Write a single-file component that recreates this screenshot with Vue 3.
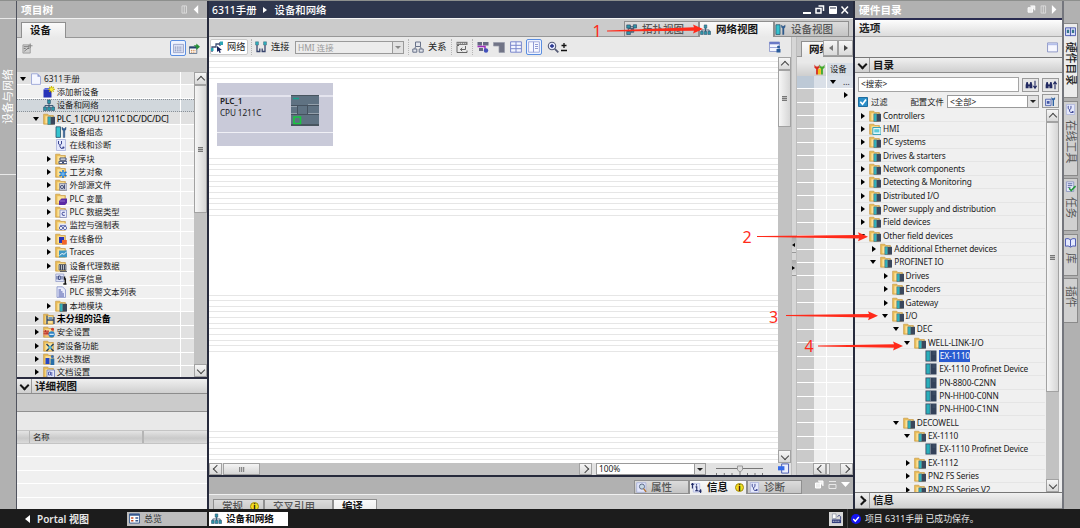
<script setup>
const folder = '<path d="M.6 1.200h4.200l1 1.300h4.600v8.700H.6z" fill="#e9bd58" stroke="#c2923a" stroke-width=".6"/><path d="M2.400 3.200h7v7.200h-7z" fill="#fbe29a"/>'
const module = '<path d="M4.800 3.800h3v7.800h-3z" fill="#2fb3bd" stroke="#4a5a6c" stroke-width=".5"/><path d="M7.800 3.800H12v7.800H7.800z" fill="#3b475c"/>'

const icons = {
  page: '<path d="M1.5.8h6l3 3v7.6h-9z" fill="#f4f6ff" stroke="#9aa5d6" stroke-width=".9"/><path d="M7.5.8v3h3z" fill="#8e9ad0"/>',
  add: '<path d="M.5 3.5h8v8h-8z" fill="#2733b8"/><path d="M.5 3.5l1.5-1.500h6v1.500z" fill="#5d6be0"/><path d="M8.500 0v6.500M5.300 3.300h6.500M6.200 1l4.600 4.600M10.800 1L6.200 5.600" stroke="#c9b90c" stroke-width="1.200"/><circle cx="8.500" cy="3.300" r="1.600" fill="#f6ec3c"/>',
  net: '<path d="M6 3.500v4M2 9V6.500h8V9M6 6.500V9" fill="none" stroke="#34506e" stroke-width=".9"/><path d="M4.600 1h2.800v3.500H4.600zM.6 8h2.900v3.500H.6zM4.600 8h2.900v3.500H4.600zM8.600 8h2.900v3.500H8.600z" fill="#2c98ab" stroke="#2c4a66" stroke-width=".6"/>',
  folder: folder + module,
  config: '<path d="M1 .8h4.500v10.600H1z" fill="#35c3cf" stroke="#24506b" stroke-width=".8"/><path d="M7 1v2.500l1.300 1.200V11.500h1.500V4.700L11 3.500V1L9.800 2.500H8.200z" fill="#2f5f96" stroke="#284a74" stroke-width=".4"/>',
  diag: '<path d="M1.500.5h9v11h-9z" fill="#e4e8fb" stroke="#a8b0dc" stroke-width=".8"/><path d="M3.500 2v3q1.500 2.500 3 0V2M5 6.300v1.500q.5 2.400 3 1.400" fill="none" stroke="#3b4592" stroke-width="1"/><circle cx="8.400" cy="8.600" r="1.100" fill="#3b4592"/>',
  blocks: folder + '<path d="M5 5h6v2.200H5zM4 8.300h3.500v2.400H4zM8.500 8.300H12v2.400H8.500z" fill="#fff" stroke="#3a4a78" stroke-width="1"/>',
  tech: folder + '<path d="M8 4v8M4.500 6l7 4M11.500 6l-7 4" stroke="#1c76d2" stroke-width="1.500"/><circle cx="8" cy="8" r="1.700" fill="#64b5f6"/>',
  ext: folder + '<path d="M4.500 4.500H12v6.800H4.500z" fill="#c6cad8" stroke="#737a98" stroke-width=".7"/><circle cx="7" cy="8" r="1.600" fill="none" stroke="#4c557c"/><path d="M9.500 5.500v4.500" stroke="#4c557c"/>',
  tag: folder + '<path d="M4 8l2.500-2.500H12v4.500L10 12H4z" fill="#5a2aa6"/><path d="M5 8h5" stroke="#a184dc" stroke-width=".8"/>',
  type: folder + '<path d="M5 4h6.500v7.500H5z" fill="#e8ebfa" stroke="#7782bd" stroke-width=".7"/><path d="M9.800 6.300q-2.800-.8-2.800 1.500t2.800 1.500" fill="none" stroke="#414c9c" stroke-width="1"/>',
  watch: folder + '<path d="M4 4.500h8V11H4z" fill="#e2e6f8"/><circle cx="6" cy="9" r="1.600" fill="#fff" stroke="#4b58a0" stroke-width=".9"/><circle cx="10" cy="9" r="1.600" fill="#fff" stroke="#4b58a0" stroke-width=".9"/><path d="M5 6.500h6" stroke="#7782bd"/>',
  backup: folder + '<path d="M4 4h5v6H4z" fill="#2733b8"/><path d="M7 7h4.800v4.500H7z" fill="#f0652a"/>',
  trace: folder + '<path d="M4 4.500h8v6.800H4z" fill="#3f97c4"/><path d="M4.500 9.500l2.500-2 2 .8 2.800-2.500" fill="none" stroke="#fff" stroke-width=".9"/>',
  proxy: folder + '<path d="M4 4.500h7V10H4z" fill="#b9bdc6" stroke="#3e4658" stroke-width=".7"/><path d="M5.500 5v5M7.500 5v5M9.500 5v5M5 11.300h7" stroke="#3e4658" stroke-width="1"/>',
  info: '<path d="M.8 1h8v7.500h-8z" fill="#dfe4f8" stroke="#8c96c4" stroke-width=".7"/><path d="M2 3v3.500M3.500 3h1.800v3.500H3.500zM7 3v3.500" fill="none" stroke="#35437c" stroke-width=".9"/><path d="M9.500 3.500v1.700M8.800 6h1.500v4.500M8.300 11h3.200" fill="none" stroke="#151515" stroke-width="1.500"/>',
  list: '<path d="M2 .8h5.500l3 3v7.600H2z" fill="#e7eafa" stroke="#8490c8" stroke-width=".8"/><path d="M3.500 4h2.500M3.500 6h4M3.500 8h5.500M3.500 10h5.500" stroke="#4755a8" stroke-width="1"/>',
  ungroup: folder + '<path d="M4 2.500v8.500M4 7h7.500M11 4v7" stroke="#2f456c" stroke-width="1.300" fill="none"/><path d="M5.500 4h4v2.500h-4z" fill="#6d97bd"/>',
  security: folder + '<path d="M.5 4h5.500v5.500H.5z" fill="#e28b70"/><path d="M.5 5.800H6M.5 7.700H6M2.500 4v2M4 6v2" stroke="#b32a20" stroke-width=".8"/><circle cx="8.600" cy="8.300" r="3.100" fill="#2d83c4"/><path d="M6.500 8.300h4.300" stroke="#fff"/><circle cx="9.500" cy="3.300" r="1.500" fill="#d33b2c"/>',
  cross: folder + '<path d="M3.500 4l7 7M10.500 4l-7 7" stroke="#27425f" stroke-width="1.500"/><path d="M5.500 6h3v3h-3z" fill="#52b4d2"/>',
  common: folder + '<path d="M2.500 5h4v6h-4z" fill="#2747c4"/><circle cx="9.300" cy="3.600" r="1.500" fill="#396fb4"/><path d="M7.500 5.500h3.800V12H7.500z" fill="#286eaa"/>',
  docs: folder + '<path d="M4 4h7.500v7.500H4z" fill="#e2e6fa" stroke="#6673ba" stroke-width=".8"/><path d="M5.500 6h2v3h-2zM8.800 6v4" fill="none" stroke="#4755a8" stroke-width=".9"/>',
  hmi: folder + '<path d="M3.800 4.500H12v7H3.800z" fill="#e0f7fa" stroke="#3da2b5" stroke-width="1"/><path d="M5.300 6.200h5v3.200h-5z" fill="#5ccbd8"/>',
  device: '<path d="M.5.5h11v11H.5z" fill="#33415a"/><path d="M1.300 1.300h3.500v9.400H1.300z" fill="#2aaeba"/><path d="M5.500.8v10.400" stroke="#8a96a5" stroke-width=".7"/><path d="M7.500 2h3M7.500 4h3" stroke="#56647a" stroke-width=".6"/>',
  newfile: '<path d="M1 2h8v9H1z" fill="#cfcfcf" stroke="#8e8e8e" stroke-width=".8"/><path d="M2 4h6M2 6h2M6 6h2M2.500 9l5-4" stroke="#777"/><path d="M9 .5v5M6.500 3h5" stroke="#888"/>',
  grid: '<path d="M.5 1.500h11v9H.5z" fill="#dce2f4" stroke="#8994bd" stroke-width=".8"/><path d="M2 4.500h8M2 6.500h8M2 8.500h8" stroke="#7884ad" stroke-dasharray="1.500 1"/>',
  export: '<path d="M.5 4h8v7.500h-8z" fill="#fff" stroke="#3e5575" stroke-width=".8"/><path d="M.5 4h8v2h-8z" fill="#26466f"/><path d="M2 8h5M2 10h5" stroke="#c46b1c" stroke-dasharray="1.200 .8"/><path d="M5 2.500h3V.5l4 3.500-4 3.500V5z" fill="#279037"/>',
  netcur: '<path d="M1 11V6h4V3h4M9 1v4" fill="none" stroke="#3d4d73" stroke-width="1.300"/><path d="M9 .5h3v3.500H9zM0 7h2.500v3H0z" fill="#2ba5b5"/><path d="M6 5l5 4-2.200.3 1 2.200-1.200.5-1-2.300L6 11z" fill="#14205a"/>',
  conn: '<path d="M2 3.500v7h2.800V7.500M10 3.500v7H7.200V7.500" fill="none" stroke="#38456d" stroke-width="1.300"/><path d="M.5.8h3v3.200h-3zM8.500.8h3v3.200h-3z" fill="#2bafbd" stroke="#516d7e" stroke-width=".5"/>',
  relation: '<path d="M3.500 1h5v4.500h-5zM.8 8h4v3.200h-4zM7.200 8h4v3.200h-4zM3.500 5.500L2.800 8M8.500 5.500L9.200 8" fill="#e2e5ec" stroke="#687289" stroke-width="1"/>',
  names: '<path d="M.5 .8h11v3.200H.5z" fill="#777"/><path d="M1.500 2.400h9" stroke="#eee" stroke-dasharray="1 .8"/><path d="M3 4.500H1v7h10v-2M9.500 5v3.500H4.500M6.200 6.700L4.500 8.500l1.700 1.700" fill="none" stroke="#555" stroke-width=".9"/>',
  addr: '<path d="M.5 1h4.500v3.500H.5zM6 1h5.500v3.500H6zM2 7h4v3H2z" fill="#656982"/><path d="M.5 5.500h7.500v4" fill="none" stroke="#a12bc0" stroke-width="1.500"/><circle cx="9" cy="9.500" r="2.200" fill="#4251bb"/>',
  corner: '<path d="M.5 1.500H11.500v10H6V5H.5z" fill="#717486" stroke="#989bab" stroke-width=".7"/>',
  table: '<path d="M.6.8h10.800v10.400H.6zM.6 4.300h10.800M.6 7.700h10.800M6 .8v10.400" fill="#f3f5ff" stroke="#7b88cc" stroke-width="1"/>',
  cols: '<path d="M.6.8h10.800v10.400H.6z" fill="#f7f8ff" stroke="#8f9ad4" stroke-width=".8"/><path d="M5.500.8v10.400M7 3.500h3M7 5.500h3M7 7.500h3" stroke="#8f9ad4" stroke-width="1"/>',
  zoom: '<circle cx="5" cy="5" r="3.700" fill="#e7eafd" stroke="#555c76" stroke-width="1.100"/><path d="M3 5h4M5 3v4" stroke="#1d2b88" stroke-width="1.300"/><path d="M7.800 7.800l3.500 3.500" stroke="#555c76" stroke-width="1.800"/>',
  saveview: '<path d="M.5 1h10v9.500H.5z" fill="#f4f6ff" stroke="#8490c8" stroke-width=".8"/><path d="M.5 1h10v2.300H.5z" fill="#6878c6"/><path d="M1 6.500h7" stroke="#9ba6da"/><circle cx="9.500" cy="6" r="1.500" fill="#2a5c9b"/><path d="M7.500 8h4v3.500h-4z" fill="#2a5c9b"/>',
  topo: '<path d="M4 3h4M2.500 9V5h6V3" fill="none" stroke="#344765"/><path d="M.8 1h4v3.500h-4zM8 .8h3.500v3.500H8zM.8 8h4v3.500h-4zM5.500 6h3v3h-3z" fill="#2c98ab" stroke="#31405c" stroke-width=".7"/>',
  props: '<path d="M.8.8h10v10.400H.8z" fill="#e2e6fa" stroke="#97a2d6" stroke-width=".7"/><circle cx="6.500" cy="5" r="2.800" fill="#c6d8e4" stroke="#566581"/><path d="M8.300 7.300l2.700 3.500" stroke="#b6742c" stroke-width="1.500"/>',
  infotab: '<path d="M2.500 1.500h7v9.500h-7z" fill="#e7eafb" stroke="#9ba6da" stroke-width=".6"/><path d="M6 2.500v1.300M5 5.300h1.300v4M4.500 9.500h3.500M1.500 1v6M0 2.500h3.500M8.500 10h3M10.500 8v4" fill="none" stroke="#192361" stroke-width="1.200"/>',
  book: '<path d="M.5 2q3-1 5.500 1 2.500-2 5.500-1v8q-3-1-5.500 1-2.500-2-5.500-1z" fill="#e4e9ff" stroke="#3f4fae" stroke-width="1"/><path d="M6 3v7.500" stroke="#3f4fae"/>',
  catalog: '<path d="M.5 2h11v8.500H.5z" fill="#d6dcf8" stroke="#4555ac" stroke-width="1"/><path d="M6 2v9" stroke="#4555ac"/><path d="M2 4h2.500v3.500H2zM7.500 4H10v3.500H7.500z" fill="#367688"/>',
  task: '<path d="M1.500 1h8v10.400h-8z" fill="#e7eafa" stroke="#7c87bb" stroke-width=".8"/><path d="M3 3h5M3 5h5M3 7h3" stroke="#59649c"/><path d="M4.500 8l2.300 2.500L11.500 5.500" fill="none" stroke="#23963a" stroke-width="1.700"/>',
  find: '<path d="M0 10V6l1-3.500h1.500L3.500 6v4zM4.500 10V6l1-3.500H7L8 6v4zM3 5.500h2v2H3z" fill="#222a62"/>',
  down: '<path d="M2 1v8M0 7l2 3 2-3" fill="none" stroke="#222a62" stroke-width="1.300"/>',
  up: '<path d="M2 11V3M0 5l2-3 2 3" fill="none" stroke="#222a62" stroke-width="1.300"/>',
  profile: '<path d="M.6 3.500h6v7h-6z" fill="#dbe0f4" stroke="#4357a6" stroke-width=".9"/><path d="M2 5.500h3v3H2z" fill="#4357a6"/><path d="M7 1v2.500l1.300 1.200V11h1.500V4.700L11 3.500V1L9.800 2.500H8.200z" fill="#2c61a2"/>',
  window: '<path d="M.6 1h10.800v9.800H.6z" fill="#f6f7ff" stroke="#7d88bd" stroke-width=".9"/><path d="M.8 1.500h10.400v2H.8z" fill="#b4bfeb"/>',
  overview: '<path d="M.6 1h10.800v10H.6z" fill="#fff" stroke="#36588e" stroke-width="1"/><path d="M.6 1h10.800v2H.6z" fill="#36588e"/><path d="M2.300 5.500h2.500M2.300 8.500h2.500" stroke="#c04a24" stroke-width="1.500"/><path d="M7 5.500h3M7 8.500h3" stroke="#36588e" stroke-width="1.500"/>',
  tools: '<path d="M.5 .5v3.500l1.800 1.400V11.500h2V5.400L6 4V.5L4.600 2.700H2z" fill="#d92a1d"/><path d="M6 .5v3.500l1.700 1.400V11.500h2V5.400L11.500 4V.5L10 2.700H7.500z" fill="#42a82b"/><path d="M4.300 5.500v6h3.200V5z" fill="#eec11e"/>',
  fit: '<path d="M4 1h7.500v10H4z" fill="#eceffc" stroke="#4253ad" stroke-width="1"/><path d="M0 3.500h7v4.500H0z" fill="#3569e8"/>',
  keyb: '<path d="M1 7h10v4H1z" fill="#333e7c"/><path d="M1.500 1h4v5h-4z" fill="#fff" stroke="#6d768e" stroke-width=".6"/><path d="M7 4q2-3 3.500 0v3" fill="none" stroke="#333e7c"/><path d="M2 9h8" stroke="#fff" stroke-dasharray="1 1"/>',
}

const projectTree = [
  { lv: 0, open: true, icon: 'page', text: '6311手册', group: true },
  { lv: 1, icon: 'add', text: '添加新设备' },
  { lv: 1, icon: 'net', text: '设备和网络', selected: true },
  { lv: 1, open: true, icon: 'folder', text: 'PLC_1 [CPU 1211C DC/DC/DC]', group: true, semi: true },
  { lv: 2, icon: 'config', text: '设备组态' },
  { lv: 2, icon: 'diag', text: '在线和诊断' },
  { lv: 2, open: false, icon: 'blocks', text: '程序块' },
  { lv: 2, open: false, icon: 'tech', text: '工艺对象' },
  { lv: 2, open: false, icon: 'ext', text: '外部源文件' },
  { lv: 2, open: false, icon: 'tag', text: 'PLC 变量' },
  { lv: 2, open: false, icon: 'type', text: 'PLC 数据类型' },
  { lv: 2, open: false, icon: 'watch', text: '监控与强制表' },
  { lv: 2, open: false, icon: 'backup', text: '在线备份' },
  { lv: 2, open: false, icon: 'trace', text: 'Traces' },
  { lv: 2, open: false, icon: 'proxy', text: '设备代理数据' },
  { lv: 2, icon: 'info', text: '程序信息' },
  { lv: 2, icon: 'list', text: 'PLC 报警文本列表' },
  { lv: 2, open: false, icon: 'folder', text: '本地模块' },
  { lv: 1, open: false, icon: 'ungroup', text: '未分组的设备', group: true, bold: true },
  { lv: 1, open: false, icon: 'security', text: '安全设置', group: true },
  { lv: 1, open: false, icon: 'cross', text: '跨设备功能', group: true },
  { lv: 1, open: false, icon: 'common', text: '公共数据', group: true },
  { lv: 1, open: false, icon: 'docs', text: '文档设置', group: true },
]

const catalog = [
  { lv: 0, open: false, text: 'Controllers' },
  { lv: 0, open: false, text: 'HMI', icon: 'hmi' },
  { lv: 0, open: false, text: 'PC systems' },
  { lv: 0, open: false, text: 'Drives & starters' },
  { lv: 0, open: false, text: 'Network components' },
  { lv: 0, open: false, text: 'Detecting & Monitoring' },
  { lv: 0, open: false, text: 'Distributed I/O' },
  { lv: 0, open: false, text: 'Power supply and distribution' },
  { lv: 0, open: false, text: 'Field devices' },
  { lv: 0, open: true, text: 'Other field devices' },
  { lv: 1, open: false, text: 'Additional Ethernet devices' },
  { lv: 1, open: true, text: 'PROFINET IO' },
  { lv: 2, open: false, text: 'Drives' },
  { lv: 2, open: false, text: 'Encoders' },
  { lv: 2, open: false, text: 'Gateway' },
  { lv: 2, open: true, text: 'I/O' },
  { lv: 3, open: true, text: 'DEC' },
  { lv: 4, open: true, text: 'WELL-LINK-I/O' },
  { lv: 5, icon: 'device', text: 'EX-1110', selected: true },
  { lv: 5, icon: 'device', text: 'EX-1110 Profinet Device' },
  { lv: 5, icon: 'device', text: 'PN-8800-C2NN' },
  { lv: 5, icon: 'device', text: 'PN-HH00-C0NN' },
  { lv: 5, icon: 'device', text: 'PN-HH00-C1NN' },
  { lv: 3, open: true, text: 'DECOWELL' },
  { lv: 4, open: true, text: 'EX-1110' },
  { lv: 5, icon: 'device', text: 'EX-1110 Profinet Device' },
  { lv: 4, open: false, text: 'EX-1112' },
  { lv: 4, open: false, text: 'PN2 FS Series' },
  { lv: 4, open: false, text: 'PN2 FS Series V2' },
]

const sideTabs = [
  { icon: 'catalog', text: '硬件目录', h: 75, active: true },
  { icon: 'diag', text: '在线工具', h: 75 },
  { icon: 'task', text: '任务', h: 53 },
  { icon: 'book', text: '库', h: 42 },
  { text: '插件', h: 45 },
]

// guide lines of the network canvas: bands of 11 lines, repeated every 136.4px
const guides = []
for (const start of [-35, 101.5, 238, 374.5]) {
  for (let i = 0; i < 11; i++) {
    const y = Math.round(start + i * 5.65 - 0.5)
    if (y > 3 && y < 406) guides.push(y)
  }
}

const marks = [
  { n: 1, x: 592.5, y: 37, from: [607, 31], to: [703, 29] },
  { n: 2, x: 742.5, y: 243, from: [757, 236.5], to: [868, 236.7] },
  { n: 3, x: 769, y: 323, from: [786, 315.5], to: [878, 315.8] },
  { n: 4, x: 804.500, y: 352, from: [818, 346], to: [903, 346] },
]

function arrow({ from: [x1, y1], to: [x2, y2] }) {
  const n = x2 - 9
  return `${x1},${y1 - 0.5} ${n},${y2 - 1.8} ${n - 1},${y2 - 4.5} ${x2},${y2} ${n - 1},${y2 + 4.5} ${n},${y2 + 1.8} ${x1},${y1 + 0.5}`
}
</script>

<template>
  <div class="app">
    <div class="body">
      <aside class="left-strip"><span>设备与网络</span></aside>

      <section class="project">
        <header class="panel-title">
          <span>项目树</span>
          <svg class="title-icons" viewBox="0 0 24 10"><path d="M2 1h5v8H2zM4.500 1v8" fill="none" stroke="#dedede" /><path d="M20 0v10l-5-5z" fill="#fff" /></svg>
        </header>
        <div class="tab-row"><div class="tab">设备</div></div>
        <div class="toolbar project-tools">
          <svg class="ic" viewBox="0 0 12 12" v-html="icons.newfile"></svg>
          <span class="grow"></span>
          <span class="pressed"><svg class="ic" viewBox="0 0 12 12" v-html="icons.grid"></svg></span>
          <svg class="ic" viewBox="0 0 12 12" v-html="icons.export"></svg>
        </div>
        <div class="spacer"></div>
        <div class="tree-area">
          <div class="tree">
            <div
              v-for="(r, i) in projectTree"
              :key="i"
              class="row"
              :class="{ group: r.group, selected: r.selected }"
            >
              <div class="cell" :style="{ paddingLeft: 1 + r.lv * 12.7 + 'px' }">
                <i class="tw" :class="{ open: r.open === true, closed: r.open === false }"></i>
                <svg class="ic" viewBox="0 0 12 12" v-html="icons[r.icon]"></svg>
                <span class="label" :class="{ bold: r.bold, semi: r.semi }">{{ r.text }}</span>
              </div>
              <div class="side-cell"></div>
            </div>
          </div>
          <div class="vscroll">
            <b class="sb up"></b>
            <div class="thumb project-thumb"></div>
            <b class="sb down last"></b>
          </div>
        </div>
        <header class="section-head detail-head"><b class="chev down"></b><span>详细视图</span></header>
        <div class="detail-gray"></div>
        <div class="detail-tools"></div>
        <div class="detail-cols"><span></span><span>名称</span><span></span></div>
        <div class="detail-rows"></div>
      </section>

      <main class="editor">
        <header class="editor-title">
          <span>6311手册</span><i></i><span>设备和网络</span>
          <svg class="win-icons" viewBox="0 0 46 10">
            <path d="M0 8h8" stroke="#fff" stroke-width="2" />
            <path d="M15.500 1h5v5M13 3.500h5v4.500h-5z" fill="none" stroke="#fff" stroke-width="1.500" />
            <path d="M26.500 1.500h7v7h-7z" fill="#fff" stroke="#fff" /><path d="M27 3h6" stroke="#2e364d" />
            <path d="M38.500 1.500l6.500 7M45 1.500l-6.500 7" stroke="#fff" stroke-width="1.500" />
          </svg>
        </header>
        <div class="tab-row view-tabs">
          <div class="tab dim"><svg class="ic" viewBox="0 0 12 12" v-html="icons.topo"></svg>拓扑视图</div>
          <div class="tab"><svg class="ic" viewBox="0 0 12 12" v-html="icons.net"></svg>网络视图</div>
          <div class="tab dim"><svg class="ic" viewBox="0 0 12 12" v-html="icons.config"></svg>设备视图</div>
        </div>
        <div class="workspace">
          <div class="network">
            <div class="toolbar net-tools">
              <span class="btn on"><svg class="ic" viewBox="0 0 12 12" v-html="icons.netcur"></svg>网络</span>
              <span class="btn conn"><svg class="ic" viewBox="0 0 12 12" v-html="icons.conn"></svg>连接</span>
              <span class="combo hmi"><span>HMI 连接</span><i></i></span>
              <span class="btn rel"><svg class="ic" viewBox="0 0 12 12" v-html="icons.relation"></svg>关系</span>
              <span class="btn sep"><svg class="ic" viewBox="0 0 12 12" v-html="icons.names"></svg></span>
              <span class="btn sep"><svg class="ic" viewBox="0 0 12 12" v-html="icons.addr"></svg></span>
              <svg class="ic gap" viewBox="0 0 12 12" v-html="icons.corner"></svg>
              <svg class="ic gap" viewBox="0 0 12 12" v-html="icons.table"></svg>
              <span class="pressed"><svg class="ic" viewBox="0 0 12 12" v-html="icons.cols"></svg></span>
              <svg class="ic zoomer" viewBox="0 0 12 12" v-html="icons.zoom"></svg>
              <svg class="pm" viewBox="0 0 8 9"><path d="M4 0v5M1.500 2.500h5M1 7.500h6" fill="none" stroke="#111" stroke-width="1.300" /></svg>
              <span class="grow"></span>
              <svg class="ic" viewBox="0 0 12 12" v-html="icons.saveview"></svg>
            </div>
            <div class="canvas-area">
              <div class="canvas">
                <svg class="guides" width="569" height="406">
                  <path v-for="y in guides" :key="y" :d="`M0 ${y + 0.5}h569`" stroke="#e6e6e6" />
                </svg>
                <div class="plc">
                  <div class="plc-text"><b>PLC_1</b><span>CPU 1211C</span></div>
                  <svg class="plc-img" viewBox="0 0 28 31">
                    <path d="M0 0h28v31H0z" fill="#5f7282" />
                    <path d="M0 0h28v1H0zM0 29h28v2H0z" fill="#48555f" />
                    <path d="M2 3.500h6" stroke="#16a08c" stroke-width="1.500" />
                    <path d="M0 10.500h28M0 19.500h28M6.500 10v10M16.500 10v10" stroke="#45525f" fill="none" />
                    <path d="M0 11.500h6M17 9.500h11M0 18.500h6M17 18.500h11" stroke="#aab4bd" stroke-width=".7" fill="none" />
                    <path d="M3 22h6.500v6.500H3z" fill="none" stroke="#17c93f" stroke-width="1.600" />
                  </svg>
                </div>
              </div>
              <div class="vscroll wide">
                <b class="sb up"></b>
                <div class="thumb canvas-thumb"></div>
                <b class="sb down last"></b>
              </div>
            </div>
            <div class="hbar">
              <b class="sb left"></b>
              <div class="hthumb"></div>
              <span class="grow track"></span>
              <b class="sb right"></b>
              <span class="combo zoom-combo"><span>100%</span><i></i></span>
              <svg class="slider" viewBox="0 0 56 12">
                <path d="M4 5.500h47M4.500 10v2M12.300 10v2M20 10v2M28 8v4M35.500 10v2M43 10v2M50.500 10v2" stroke="#777" />
                <path d="M25.500 3h5v4L28 9l-2.500-2z" fill="#ddd" stroke="#999" />
              </svg>
              <svg class="ic" viewBox="0 0 12 12" v-html="icons.fit"></svg>
            </div>
          </div>
          <div class="splitter"><i class="l"></i><i class="r"></i></div>
          <div class="overview">
            <div class="ov-tabs"><div class="tab">网络</div><b class="nav prev"></b><b class="nav next"></b></div>
            <div class="ov-gap"></div>
            <div class="ov-head"><span></span><span><svg class="ic" viewBox="0 0 12 12" v-html="icons.tools"></svg></span><span>设备</span></div>
            <div class="ov-rows">
              <div v-for="n in 29" :key="n" class="ov-row" :class="{ first: n === 1 }">
                <span></span><span></span>
                <span><i v-if="n === 1" class="tw open"></i><template v-if="n === 1">...</template><i v-if="n === 2" class="tw closed"></i></span>
              </div>
            </div>
            <div class="ov-scroll"><b class="sb left"></b><i></i><b class="sb right"></b></div>
          </div>
        </div>
        <div class="inspector-tabs">
          <div class="tab dim"><svg class="ic" viewBox="0 0 12 12" v-html="icons.props"></svg>属性</div>
          <div class="tab"><svg class="ic" viewBox="0 0 12 12" v-html="icons.infotab"></svg>信息<em>i</em></div>
          <div class="tab dim"><svg class="ic" viewBox="0 0 12 12" v-html="icons.diag"></svg>诊断</div>
          <svg class="insp-icons" viewBox="0 0 36 10">
            <path d="M4 1h5v5M1.500 3h5v5h-5z" fill="#eee" stroke="#fff" /><path d="M15 1.500h7M15 4.500h7v4h-7z" fill="none" stroke="#e8e8e8" /><path d="M27 2h9l-4.500 5z" fill="#fff" />
          </svg>
        </div>
        <div class="inspector-sub">
          <div class="tab dim">常规<em>i</em></div>
          <div class="tab dim">交叉引用</div>
          <div class="tab">编译</div>
        </div>
      </main>

      <section class="hardware">
        <header class="panel-title hw-title">
          <span>硬件目录</span>
          <svg class="hw-icons" viewBox="0 0 34 10"><path d="M4 1h5v5M1.500 3h5v5h-5z" fill="#eee" stroke="#fff" /><path d="M16 1h5v8h-5zM18.500 1v8" fill="none" stroke="#dedede" /><path d="M28 0v10l5-5z" fill="#fff" /></svg>
        </header>
        <div class="options">选项</div>
        <div class="toolbar hw-tools"><svg class="ic" viewBox="0 0 12 12" v-html="icons.window"></svg></div>
        <header class="section-head"><b class="chev down"></b><span>目录</span></header>
        <div class="search">
          <div class="field">&lt;搜索&gt;</div>
          <button><svg class="find" viewBox="0 0 8 12" v-html="icons.find"></svg><svg class="dir" viewBox="0 0 4 12" v-html="icons.down"></svg></button>
          <button><svg class="find" viewBox="0 0 8 12" v-html="icons.find"></svg><svg class="dir" viewBox="0 0 4 12" v-html="icons.up"></svg></button>
        </div>
        <div class="filter">
          <svg class="check" viewBox="0 0 10 10"><path d="M.5.5h9v9h-9z" fill="#2b8fc9" stroke="#1f6c9e" /><path d="M2.300 4.800l2.200 2.400L8 2.600" fill="none" stroke="#fff" stroke-width="1.700" /></svg>
          <span>过滤</span>
          <span class="profile">配置文件</span>
          <span class="combo all"><span>&lt;全部&gt;</span><i></i></span>
          <button><svg class="ic" viewBox="0 0 12 12" v-html="icons.profile"></svg></button>
        </div>
        <div class="tree-area hw-area">
          <div class="tree hw-tree">
            <div v-for="(r, i) in catalog" :key="i" class="row">
              <div class="cell" :style="{ paddingLeft: 2 + r.lv * 11.25 + 'px' }">
                <i class="tw" :class="{ open: r.open === true, closed: r.open === false }"></i>
                <svg class="ic" viewBox="0 0 12 12" v-html="icons[r.icon || 'folder']"></svg>
                <span class="label" :class="{ hl: r.selected }">{{ r.text }}</span>
              </div>
            </div>
          </div>
          <div class="vscroll">
            <b class="sb up"></b>
            <div class="thumb hw-thumb"></div>
            <b class="sb down last"></b>
          </div>
        </div>
        <header class="section-head info-head"><b class="chev right"></b><span>信息</span></header>
      </section>

      <aside class="right-strip">
        <div v-for="t in sideTabs" :key="t.text" class="vtab" :class="{ active: t.active }" :style="{ height: t.h + 'px' }">
          <svg v-if="t.icon" class="ic" viewBox="0 0 12 12" v-html="icons[t.icon]"></svg>
          <span>{{ t.text }}</span>
        </div>
      </aside>
    </div>

    <footer class="status">
      <div class="portal"><i></i>Portal 视图</div>
      <div class="task"><svg class="ic" viewBox="0 0 12 12" v-html="icons.overview"></svg>总览</div>
      <div class="task active"><svg class="ic" viewBox="0 0 12 12" v-html="icons.net"></svg>设备和网络</div>
      <span class="grow"></span>
      <span class="keyb"><svg class="ic" viewBox="0 0 12 12" v-html="icons.keyb"></svg></span>
      <div class="message">
        <svg viewBox="0 0 10 10"><circle cx="5" cy="5" r="5" fill="#1414f0" /><path d="M2.300 5l2 2.200L7.800 3" fill="none" stroke="#fff" stroke-width="1.400" /></svg>
        项目 6311手册 已成功保存。
      </div>
    </footer>

    <svg class="marks" width="1080" height="528">
      <g v-for="m in marks" :key="m.n" fill="#ff2a1a">
        <text :x="m.x" :y="m.y">{{ m.n }}</text>
        <polygon :points="arrow(m)" />
      </g>
    </svg>
  </div>
</template>

<style>
body {
  margin: 0;
  overflow: hidden;
}
</style>

<style scoped>
.app {
  position: relative;
  box-sizing: border-box;
  width: 1080px;
  height: 528px;
  border-top: 1px solid #8d8f8d;
  display: flex;
  flex-direction: column;
  overflow: hidden;
  background: #b1b1b1;
  color: #222;
  font-family: "Noto Sans", "Noto Sans CJK SC", sans-serif;
  font-size: 8.4px;
  line-height: 12px;
  white-space: nowrap;
}

.app * {
  box-sizing: border-box;
}

.body {
  height: 508px;
  display: flex;
}

.ic {
  width: 11px;
  height: 11px;
  flex: none;
  display: block;
}

.grow {
  flex: 1;
}

/* side strips */
.left-strip {
  width: 17px;
  border-right: 1px solid #50535e;
  display: flex;
  flex-direction: column;
  color: #fff;
}

.left-strip span {
  height: 157px;
  margin-top: 17px;
  border-top: 1px solid #e8e8e8;
  border-bottom: 1px solid #e8e8e8;
  width: 16px;
  writing-mode: vertical-rl;
  text-orientation: sideways;
  transform: rotate(180deg);
  font-size: 11px;
  line-height: 15px;
  text-align: center;
}

.right-strip {
  width: 18px;
  border-left: 2px solid #74767d;
  padding-top: 22px;
  display: flex;
  flex-direction: column;
  gap: 2.500px;
}

.vtab {
  width: 14px;
  flex: none;
  background: #d0d0d0;
  border: 1px solid #8a8a8a;
  border-left: 0;
  display: flex;
  flex-direction: column;
  align-items: center;
  padding-top: 2px;
  gap: 5px;
  color: #555;
}

.vtab.active {
  background: #ececec;
  color: #222;
  font-weight: 500;
}

.vtab span {
  writing-mode: vertical-rl;
  text-orientation: sideways;
  font-size: 10.800px;
  line-height: 12px;
}

.vtab:last-child {
  padding-top: 7px;
}

/* project tree */
.project {
  width: 190px;
  display: flex;
  flex-direction: column;
  overflow: hidden;
}

.panel-title {
  height: 18px;
  flex: none;
  background: #b1b1b1;
  border-bottom: 1px solid #f2f2f2;
  color: #fff;
  font-weight: bold;
  font-size: 10.700px;
  line-height: 16px;
  padding-left: 4px;
  display: flex;
  align-items: center;
  justify-content: space-between;
}

.title-icons {
  width: 24px;
  height: 9px;
  margin-right: 4px;
}

.tab-row {
  height: 19px;
  flex: none;
  background: #cbcbcb;
  border-bottom: 1px solid #979797;
  display: flex;
  align-items: flex-end;
  padding-left: 4px;
}

.tab {
  height: 16px;
  margin-bottom: -1px;
  border: 1px solid #8f8f8f;
  border-bottom: 0;
  background: linear-gradient(#fafafa, #e9e9e9);
  color: #151515;
  font-weight: bold;
  font-size: 10.500px;
  line-height: 15px;
  display: flex;
  align-items: center;
  gap: 4px;
}

.tab.dim {
  background: linear-gradient(#dcdcdc, #c4c4c4);
  color: #555;
  font-weight: 500;
  border-bottom: 1px solid #8f8f8f;
}

.project .tab {
  width: 45px;
  padding-left: 8px;
}

.toolbar {
  height: 20px;
  flex: none;
  background: #e9e9e9;
  display: flex;
  align-items: center;
}

.project-tools {
  padding: 0 7px 0 5px;
}

.pressed {
  width: 16px;
  height: 16px;
  border: 1px solid #5b8ee0;
  border-radius: 2px;
  background: #eef3ff;
  display: flex;
  align-items: center;
  justify-content: center;
}

.project-tools .pressed {
  margin-right: 3px;
}

.spacer {
  height: 14px;
  flex: none;
  background: #c2c2c2;
}

.tree-area {
  height: 305px;
  flex: none;
  display: flex;
  overflow: hidden;
  background: #efefef;
}

.tree {
  width: 177px;
  overflow: hidden;
}

.tree .ic {
  width: 12px;
  height: 12px;
}

.row {
  height: 13.360px;
  display: flex;
  background: #f0f0f0;
  border-bottom: 1px solid #fff;
}

.row.group {
  background: #e1e1e1;
}

.row.selected {
  background: #d1d7dc;
  border: 1px dotted #8a9096;
  border-width: 1px 0;
}

.row.selected .cell {
  margin-top: -1px;
}

.cell {
  width: 163px;
  display: flex;
  align-items: center;
  height: 13px;
}

.side-cell {
  flex: 1;
  border-left: 1px solid #fff;
}

.label {
  margin-left: 2px;
  line-height: 12px;
}

.label.bold {
  font-weight: bold;
  font-size: 9px;
  color: #000;
}

.label.semi {
  font-weight: 500;
  letter-spacing: -.2px;
}

.tw {
  width: 12px;
  height: 12px;
  flex: none;
  display: flex;
  align-items: center;
  justify-content: flex-start;
  padding-left: 2px;
}

.tw.open::before {
  content: '';
  border: 3px solid transparent;
  border-top: 4px solid #000;
  border-bottom: 0;
}

.tw.closed::before {
  content: '';
  border: 3px solid transparent;
  border-left: 4px solid #000;
  border-right: 0;
  margin-left: 2px;
}

.vscroll {
  width: 13px;
  margin-left: auto;
  background: #c2c2c2;
  display: flex;
  flex-direction: column;
}

.thumb {
  border: 1px solid #a2a2a2;
  background: linear-gradient(90deg, #f6f6f6, #d6d6d6);
  display: flex;
  align-items: center;
  justify-content: center;
}

.thumb::after {
  content: '';
  width: 5px;
  height: 5px;
  background: repeating-linear-gradient(#777 0 1px, #bbb 1px 2px);
}

.project-thumb {
  height: 128px;
}

.sb {
  width: 13px;
  height: 13px;
  flex: none;
  background: linear-gradient(#f6f6f6, #d8d8d8);
  border: 1px solid #a2a2a2;
  display: flex;
  align-items: center;
  justify-content: center;
}

.sb.last {
  margin-top: auto;
}

.sb::before,
.chev::before {
  content: '';
  width: 5px;
  height: 5px;
  border: solid #444;
  border-width: 1.500px 1.500px 0 0;
}

.sb.up::before {
  transform: translateY(1px) rotate(-45deg);
}

.down::before {
  transform: translateY(-1px) rotate(135deg);
}

.left::before {
  transform: translateX(1px) rotate(-135deg);
}

.right::before {
  transform: translateX(-1px) rotate(45deg);
}

.section-head {
  height: 16px;
  flex: none;
  background: linear-gradient(#f0f0f0, #cfcfcf);
  border-top: 1px solid #777;
  border-bottom: 1px solid #8c8c8c;
  display: flex;
  align-items: center;
  font-weight: bold;
  font-size: 10.500px;
  line-height: 13px;
  color: #151515;
}

.chev {
  width: 15px;
  height: 100%;
  border-right: 1px solid #999;
  margin-right: 3px;
  display: flex;
  align-items: center;
  justify-content: center;
}

.chev::before {
  border-color: #151515;
  border-width: 2px 2px 0 0;
}

.detail-head {
  height: 17px;
  border-top: 2px solid #2a2c40;
}

.detail-gray {
  height: 18px;
  flex: none;
  background: #cbcbcb;
  border-bottom: 1px solid #909090;
}

.detail-tools {
  height: 18px;
  flex: none;
  background: #e9e9e9;
}

.detail-cols {
  height: 14px;
  flex: none;
  background: linear-gradient(#e4e4e4, #c9c9c9 60%, #dadada);
  border: 1px solid #c4c4c4;
  border-width: 1px 0;
  display: flex;
}

.detail-cols span {
  border-right: 1px solid #b5b5b5;
}

.detail-cols span:nth-child(1) {
  width: 13px;
}

.detail-cols span:nth-child(2) {
  width: 113px;
  padding-left: 3px;
}

.detail-rows {
  flex: 1;
  background: repeating-linear-gradient(#f0f0f0 0 12.400px, #fff 12.400px 13.400px);
}

/* editor */
.editor {
  width: 648px;
  border: solid #262a3c;
  border-width: 0 2px;
  display: flex;
  flex-direction: column;
}

.editor-title {
  height: 17px;
  flex: none;
  background: #2e364d;
  color: #fff;
  font-size: 10.400px;
  font-weight: 500;
  padding-left: 3px;
  display: flex;
  align-items: center;
}

.editor-title i {
  border: 3px solid transparent;
  border-left: 4px solid #fff;
  border-right: 0;
  margin: 0 8px 0 6px;
}

.win-icons {
  width: 46px;
  height: 10px;
  margin: 0 4px 0 auto;
}

.view-tabs {
  height: 19px;
  border-top: 1px solid #f4f4f4;
  justify-content: flex-end;
  padding-right: 4px;
}

.view-tabs .tab {
  width: 75px;
  gap: 5px;
  padding-left: 0;
}

.view-tabs .tab:first-child .ic {
  margin-left: 1px;
}

.workspace {
  height: 438px;
  flex: none;
  display: flex;
}

.network {
  width: 582px;
  display: flex;
  flex-direction: column;
}

.net-tools {
  padding: 0 10px 0 1px;
  font-size: 9.200px;
}

.net-tools .ic {
  width: 12px;
  height: 12px;
}

.btn {
  height: 16px;
  display: flex;
  align-items: center;
  gap: 4px;
}

.btn.on {
  width: 38px;
  background: #fff;
  border: 1px solid #c9c9c9;
  border-radius: 2px;
}

.btn.conn {
  border-left: 1px dotted #b5b5b5;
  margin-left: 3px;
  padding-left: 3px;
  width: 44px;
}

.btn.rel {
  border-left: 1px dotted #b5b5b5;
  margin-left: 4px;
  padding-left: 3px;
  width: 43px;
}

.btn.sep {
  border-left: 1px dotted #b5b5b5;
  padding-left: 4px;
  width: 21px;
}

.gap {
  margin-right: 5px;
}

.net-tools .pressed {
  margin-left: -1px;
}

.zoomer {
  margin: 0 1px 0 5px;
}

.pm {
  width: 8px;
  height: 9px;
}

.combo {
  height: 13px;
  background: #fff;
  border: 1px solid #9a9a9a;
  display: flex;
  font-size: 8.400px;
  line-height: 11px;
  padding-left: 2px;
}

.combo i {
  width: 11px;
  margin-left: auto;
  border-left: 1px solid #9a9a9a;
  background: #e2e2e2;
  display: flex;
  align-items: center;
  justify-content: center;
}

.combo i::before {
  content: '';
  border: 3px solid transparent;
  border-top: 3.500px solid #222;
  border-bottom: 0;
}

.hmi {
  width: 109px;
  background: #ececec;
  color: #999;
}

.hmi i::before {
  border-top-color: #888;
}

.canvas-area {
  height: 406px;
  flex: none;
  display: flex;
}

.canvas {
  width: 569px;
  position: relative;
  background: #fff;
  overflow: hidden;
}

.guides {
  display: block;
}

.plc {
  position: absolute;
  left: 8px;
  top: 26px;
  width: 116px;
  height: 63px;
  display: flex;
  justify-content: space-between;
  padding: 12px 14px 0 3px;
  background: linear-gradient(#c9cad9 0 12px, #e4e4ee 12px 13.500px, #c9cad9 13.500px 49px, #f0f0f6 49px 50.500px, #c9cad9 50.500px);
  font-size: 8.200px;
  letter-spacing: -.1px;
}

.plc-text {
  display: flex;
  flex-direction: column;
  line-height: 11.500px;
}

.plc-text b {
  font-weight: 600;
}

.plc-img {
  width: 28px;
  height: 31px;
}

.canvas-thumb {
  height: 57px;
}

.hbar {
  flex: 1;
  display: flex;
  background: #e2e2e2;
}

.hbar .sb {
  height: 12px;
}

.hthumb {
  width: 37px;
  margin-left: 1px;
  border: 1px solid #a2a2a2;
  background: linear-gradient(#f4f4f4, #d6d6d6);
  display: flex;
  align-items: center;
  justify-content: center;
}

.hthumb::after {
  content: '';
  width: 6px;
  height: 5px;
  background: repeating-linear-gradient(90deg, #888 0 1px, #ccc 1px 2px);
}

.track {
  background: #c2c2c2;
}

.zoom-combo {
  width: 110px;
  height: 12px;
  margin-left: 4px;
  line-height: 10px;
}

.slider {
  width: 56px;
  height: 12px;
  margin: 0 10px 0 6px;
}

.hbar .ic {
  margin-right: 2px;
}

.splitter {
  width: 6px;
  background: #d6d6d6;
  border: solid #bdbdbd;
  border-width: 0 1px;
  display: flex;
  flex-direction: column;
  gap: 7px;
  padding-top: 200px;
}

.splitter i {
  height: 16px;
  background: linear-gradient(#aaa, #ddd);
  border-bottom: 1px solid #999;
  display: flex;
  align-items: center;
}

.splitter i::before {
  content: '';
  border: 2.500px solid transparent;
}

.splitter .l::before {
  border-right: 3px solid #000;
  border-left: 0;
}

.splitter .r::before {
  border-left: 3px solid #000;
  border-right: 0;
}

.overview {
  flex: 1;
  display: flex;
  flex-direction: column;
  background: #efefef;
  overflow: hidden;
}

.ov-tabs {
  height: 20px;
  flex: none;
  display: flex;
  align-items: flex-end;
  padding: 0 0 0 4px;
  background: #cbcbcb;
  border-bottom: 1px solid #999;
}

.ov-tabs .tab {
  width: 22px;
  padding-left: 7px;
  overflow: hidden;
  border-right: 0;
}

.nav {
  width: 15px;
  height: 16px;
  background: linear-gradient(#f6f6f6, #dadada);
  border: 1px solid #a2a2a2;
  display: flex;
  align-items: center;
  justify-content: center;
}

.nav::before {
  content: '';
  border: 3px solid transparent;
}

.nav.prev::before {
  border-right: 4px solid #777;
  border-left: 0;
}

.nav.next::before {
  border-left: 4px solid #444;
  border-right: 0;
}

.ov-gap {
  height: 6px;
  flex: none;
  background: #e9e9e9;
}

.ov-head,
.ov-row {
  display: flex;
  flex: none;
}

.ov-head {
  height: 13px;
  background: linear-gradient(#e8e8e8, #cecece);
}

.ov-head > span,
.ov-row > span {
  height: 100%;
  flex: none;
}

.ov-head > :first-child,
.ov-row > :first-child {
  width: 17px;
}

.ov-head > :nth-child(2),
.ov-row > :nth-child(2) {
  width: 13px;
  border-right: 1px solid #fff;
}

.ov-head > :nth-child(2) {
  padding-top: 1px;
}

.ov-head > :last-child {
  padding-left: 3px;
  background: #d7dde5;
  flex: 1;
}

.ov-rows {
  height: 387px;
  overflow: hidden;
}

.ov-row {
  height: 13.360px;
  border-bottom: 1px solid #fff;
}

.ov-row > :first-child {
  background: #cacaca;
}

.ov-row > :last-child {
  flex: 1;
  display: flex;
  line-height: 12px;
}

.ov-row.first {
  background: #dae0e8;
}

.ov-row.first > :first-child {
  background: #bdc9d6;
}

.ov-row.first .tw {
  margin-left: 1px;
  width: 15px;
}

.ov-row .tw.closed {
  margin-left: 13px;
}

.ov-scroll {
  height: 12px;
  display: flex;
  justify-content: flex-end;
  background: #cfcfcf;
}

.ov-scroll .sb {
  height: 12px;
}

.ov-scroll i {
  width: 4px;
  background: #ececec;
  border: 1px solid #a2a2a2;
  margin-right: 10px;
}

.inspector-tabs {
  height: 20px;
  flex: none;
  border-top: 2px solid #262a3c;
  border-bottom: 1px solid #f0f0f0;
  background: #b1b1b1;
  display: flex;
  align-items: flex-end;
  padding-left: 425px;
}

.inspector-tabs .tab {
  width: 55px;
  height: 14px;
  margin: 0;
  padding-left: 1px;
  line-height: 13px;
}

.inspector-tabs .tab:nth-child(2) {
  width: 58px;
}

.inspector-tabs .tab:nth-child(2) .ic {
  margin-right: 1px;
}

em {
  width: 9px;
  height: 9px;
  border-radius: 50%;
  background: #f4dc1e;
  border: .5px solid #a08e10;
  color: #111;
  font: bold 8px/8px "Noto Sans", sans-serif;
  text-align: center;
  margin-left: 3px;
}

.insp-icons {
  width: 36px;
  height: 10px;
  margin: 0 3px 4px auto;
}

.inspector-sub {
  flex: 1;
  background: #cbcbcb;
  display: flex;
  padding: 4px 0 0 4px;
  overflow: hidden;
}

.inspector-sub .tab {
  width: 69px;
  padding-left: 8px;
  height: 14px;
  line-height: 13px;
}

.inspector-sub .tab:first-child {
  width: 51px;
}

.inspector-sub .tab:last-child {
  width: 44px;
}

/* hardware catalog */
.hardware {
  width: 207px;
  display: flex;
  flex-direction: column;
  background: #efefef;
}

.hw-title {
  height: 19px;
  border-bottom: 2px solid #2a2c50;
}

.hw-icons {
  width: 34px;
  height: 9px;
  margin-right: 3px;
}

.options {
  height: 17px;
  flex: none;
  background: linear-gradient(#fdfdfd, #dcdcdc);
  border-bottom: 1px solid #aaa;
  padding-left: 4px;
  font-weight: bold;
  font-size: 10.700px;
  line-height: 17px;
}

.hw-tools {
  justify-content: flex-end;
  padding-right: 4px;
}

.search {
  height: 19px;
  flex: none;
  display: flex;
  align-items: flex-end;
  gap: 3px;
  padding: 0 3px 0 3px;
}

.field {
  width: 162px;
  height: 15px;
  background: #fff;
  border: 1px solid #a5a5a5;
  padding-left: 2px;
  line-height: 12px;
}

button {
  width: 17px;
  height: 14px;
  padding: 0;
  border: 1px solid #9a9a9a;
  background: #e6e6e6;
  display: flex;
  align-items: center;
  justify-content: center;
}

.find {
  width: 8px;
  height: 10px;
}

.dir {
  width: 4px;
  height: 10px;
}

.filter {
  height: 17px;
  flex: none;
  display: flex;
  align-items: flex-end;
  padding: 0 3px 1px;
}

.check {
  width: 10px;
  height: 10px;
  margin: 0 3px 1px 0;
}

.profile {
  margin: 0 3px 0 auto;
}

.all {
  width: 92px;
  margin-right: 3px;
}

.hw-area {
  height: 383px;
  padding-right: 3px;
}

.hw-tree {
  width: 190px;
  font-size: 8.300px;
  letter-spacing: -.14px;
}

.hw-tree .row {
  border-bottom-color: #e5e5e5;
}

.label.hl {
  background: #2a5bd0;
  color: #fff;
  padding: 0 .5px;
}

.hw-thumb {
  height: 270px;
}

.info-head {
  flex: 1;
}

/* status bar */
.status {
  height: 19px;
  background: #1c1c1c;
  color: #e8e8e8;
  display: flex;
  align-items: center;
}

.portal {
  width: 127px;
  display: flex;
  align-items: center;
  padding-left: 25px;
  font-size: 10px;
  font-weight: 600;
}

.portal i {
  border: 4px solid transparent;
  border-right: 5px solid #fff;
  border-left: 0;
  margin-right: 7px;
}

.task {
  width: 80px;
  height: 14px;
  background: #bdbdbd;
  color: #333;
  display: flex;
  align-items: center;
  gap: 4px;
  padding-left: 2px;
  margin-right: 2px;
  font-size: 9px;
}

.task.active {
  width: 79px;
  background: #fff;
  color: #111;
  font-weight: bold;
  font-size: 9.600px;
}

.keyb {
  width: 14px;
  height: 14px;
  background: #d8d8d8;
  display: flex;
  align-items: center;
  justify-content: center;
  margin-right: 4px;
}

.message {
  width: 233px;
  height: 19px;
  border-left: 1px solid #444;
  display: flex;
  align-items: center;
  gap: 4px;
  padding-left: 3px;
  font-size: 8.900px;
}

.message svg {
  width: 10px;
  height: 10px;
}

/* numbered callouts over the screen */
.marks {
  position: absolute;
  left: 0;
  top: -1px;
  pointer-events: none;
}

.marks text {
  font-size: 16px;
}
</style>
